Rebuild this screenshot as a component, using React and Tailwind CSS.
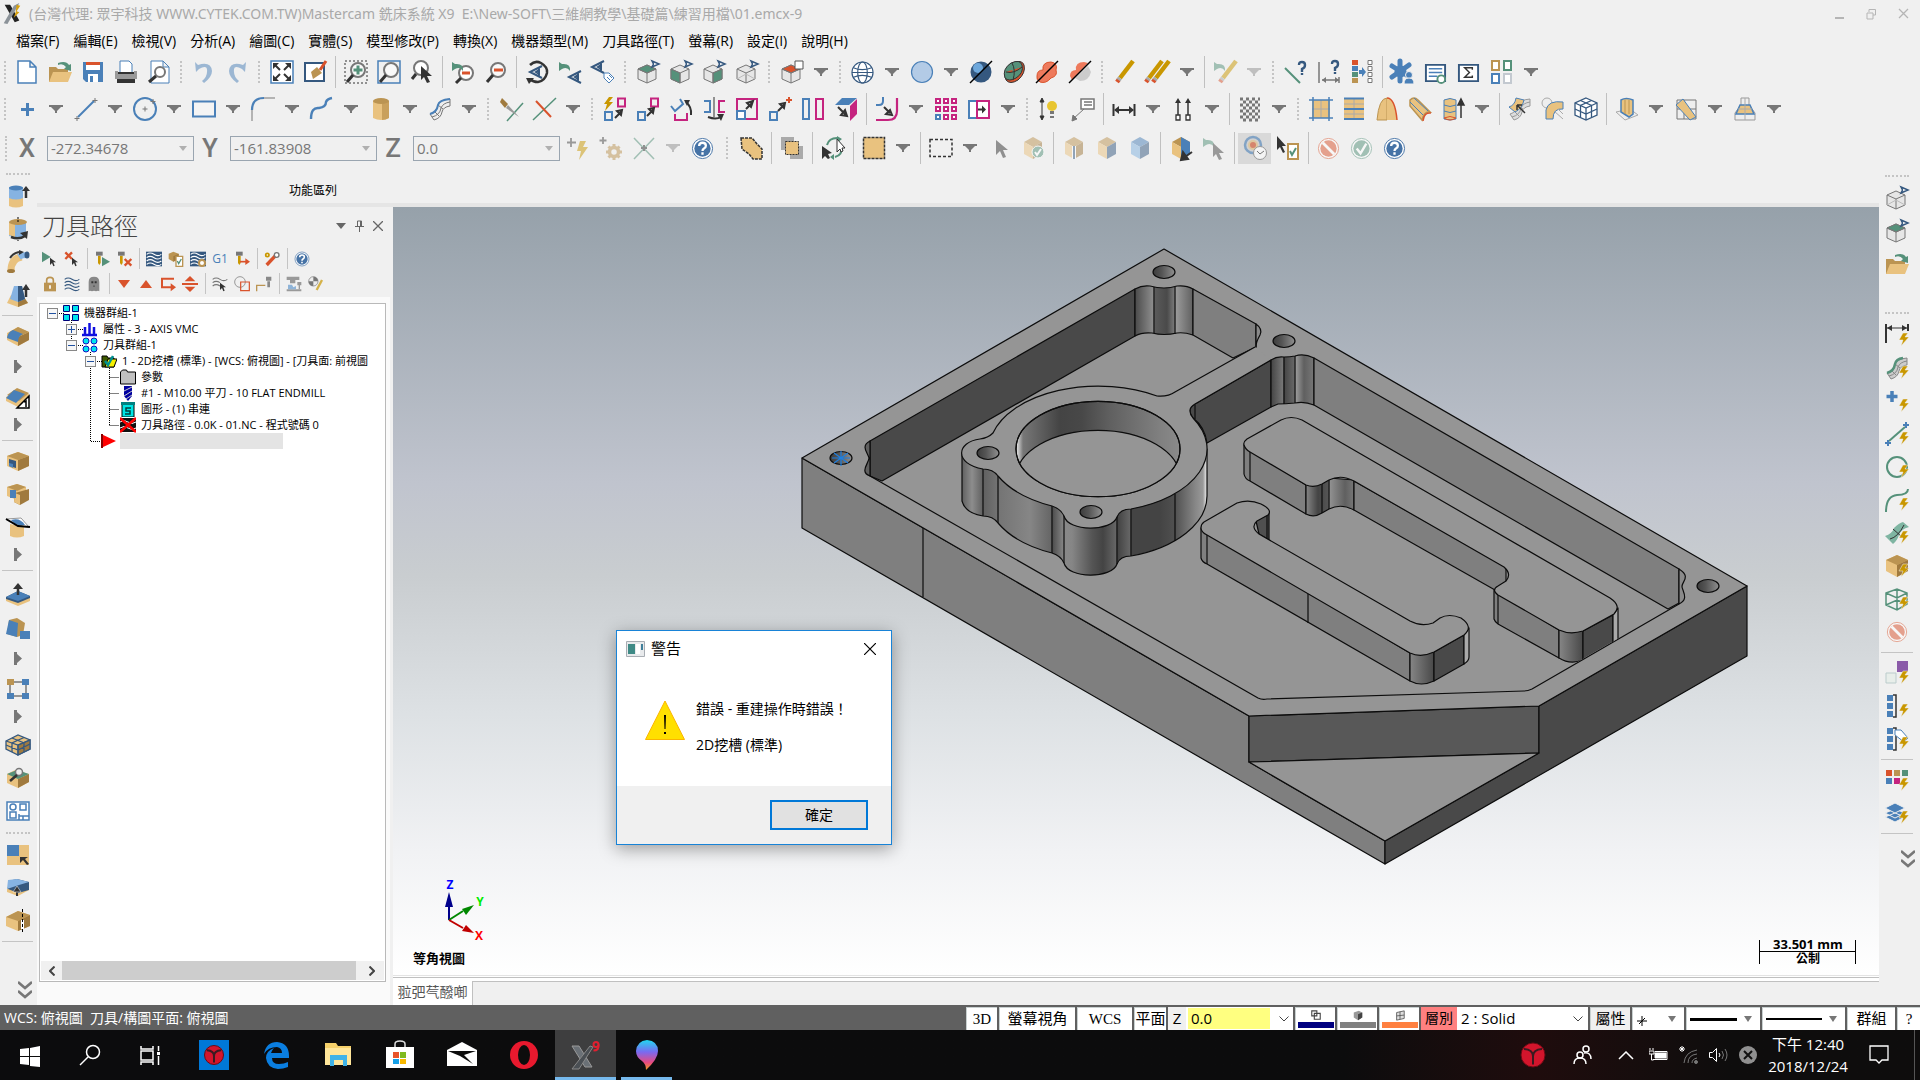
// ---------------------------------------------------------------------------
// Mastercam X9 — main window with the toolpath manager, the isometric part
// view and the "operation failed" warning box, on the Windows 10 taskbar.
// ---------------------------------------------------------------------------
import { useState } from 'react';
import clsx from 'clsx';

const UI_FONT = "font-['Open_Sans','Noto_Sans_CJK_TC',sans-serif]";

const BLUE = '#4a80b8';
const NAVY = '#35587f';
const GREEN = '#55917a';
const RED = '#d9532c';
const TAN = '#e9c27f';
const OCHRE = '#bb9452';
const BROWN = '#a07a3e';
const GRAY = '#777777';
const DARK = '#333333';
const PINK = '#c5247f';
const GOLD = '#c99700';

// ---------------------------------------------------------------------------
// Icon fragments
// ---------------------------------------------------------------------------
function Cube({ t = TAN, l = TAN, r = BROWN, line = 'none' }) {
  return (
    <g stroke={line} strokeLinejoin="round">
      <path d="M12 1 21 6 12 11 3 6z" fill={t} />
      <path d="M3 6 12 11V23L3 18z" fill={l} />
      <path d="M21 6 12 11V23L21 18z" fill={r} />
    </g>
  );
}

// Wire cube with an eye marker, one face filled
function ViewCube({ face }) {
  return (
    <>
      <g fill="#e6e6e6" stroke={GRAY} strokeLinejoin="round">
        <path d="M11 5 20 9V19L11 23 2 19V9z" />
        {face === 'top' && <path d="M11 5 20 9 11 13 2 9z" fill={GREEN} />}
        {face === 'red' && <path d="M11 5 20 9 11 13 2 9z" fill={RED} />}
        {face === 'left' && <path d="M2 9 11 13V23L2 19z" fill={GREEN} />}
        {face === 'right' && <path d="M20 9 11 13V23L20 19z" fill={GREEN} />}
        <path d="M2 9 11 13 20 9M11 13V23" fill="none" />
        {!face && <path d="M2 19 11 14 20 19" fill="none" stroke="#bbb" />}
      </g>
      {face === 'red' ? (
        <path d="M15 1h8v8h-8z" fill="#fff" stroke="#555" />
      ) : (
        <path d="M16 1 23 4 16 7 17.500 4z" fill="#fff" stroke={NAVY} strokeWidth="1.500" />
      )}
    </>
  );
}

const Bolt = () => <path d="M18 10h5l-3 4h4l-8 9 2-6h-4z" fill={GOLD} stroke="#f0f0f0" strokeWidth=".5" />;
const Cursor = ({ c = DARK }) => <path d="M8 4v15l4-4 3 7 3-1-3-7h5z" fill={c} />;
const SmallCursor = () => <path d="M12 10v11l3-3 2 5 2-1-2-5h4z" fill={DARK} />;
const Lens = ({ children }) => (
  <>
    <circle cx="14" cy="10" r="7" fill="#fff" fillOpacity=".6" stroke={GRAY} strokeWidth="2" />
    <path d="M9 15 3 22" stroke={DARK} strokeWidth="3" />
    {children}
  </>
);
const Pencil = ({ x = 0 }) => (
  <g transform={`translate(${x} 0)`}>
    <path d="M20 1 7 18" stroke={GOLD} strokeWidth="4.500" />
    <path d="M7 18 5 20.500" stroke="#aaa" strokeWidth="4.500" />
    <path d="M5.500 20 4 22" stroke={RED} strokeWidth="4.500" />
  </g>
);
const Undo = ({ c = BLUE }) => <path d="M1 2l1 10 3-3q9-5 8 3q0 5-5 9l2 2q8-6 8-12q-1-10-14-6z" fill={c} />;
const SmallUndo = ({ c = GREEN }) => <path d="M1 2v9l3-2q5-3 8 2q1-8-8-7z" fill={c} />;
const Eye = ({ x = 0, y = 0 }) => (
  <path d="M12 0 0 6 12 12M9 2.500v7M9 4 6 6 9 8" transform={`translate(${x} ${y})`} fill="none" stroke={NAVY} strokeWidth="2" />
);
const Tool = () => <path d="M4 2h8v4H4zM6 7h4v11l-2 3-2-3z" fill={GOLD} />;
const Help = ({ ring = '#4673a6' }) => (
  <>
    <circle cx="12" cy="12" r="10.500" fill="#fff" stroke={ring} />
    <circle cx="12" cy="12" r="8.500" fill={ring} />
    <path d="M8.500 9.500q0-3.500 3.500-3.500t3.500 3q0 2-2 3-1.500 1-1.500 2.500M12 16v2.500" fill="none" stroke="#fff" strokeWidth="2.400" />
  </>
);
const Forbidden = () => (
  <g opacity=".5">
    <circle cx="12" cy="12" r="10.500" fill="#fff" stroke={RED} />
    <circle cx="12" cy="12" r="8.500" fill={RED} />
    <path d="M6 6 18 18" stroke="#fff" strokeWidth="3" />
  </g>
);
const Folder = () => (
  <>
    <path d="M1 7h7l2 2h10v13H1z" fill={OCHRE} />
    <path d="M5 12h19l-4 10H1z" fill={TAN} />
    <path d="M10 3q8-3 11 2l2-1v7l-7-2 2-2q-3-4-8-2z" fill={GREEN} />
  </>
);
const Waves = ({ c }) => (
  <path d="M1 5q5-4 11 0t11 0M1 10q5-4 11 0t11 0M1 15q5-4 11 0t11 0M1 20q5-4 11 0t11 0" fill="none" stroke={c} strokeWidth="1.700" />
);
const Clip = () => (
  <>
    <path d="M12 8h10v15H12z" fill="#fff" stroke={OCHRE} strokeWidth="2" />
    <path d="M14 15l2 4 4-7" fill="none" stroke={GREEN} strokeWidth="2" />
  </>
);
const Surf = ({ a = '#ddd', b = GRAY }) => (
  <>
    <path d="M2 17Q9 15 10 8q1-5 12-6v7q-7 1-8 6-1 6-8 8z" fill={a} stroke={b} />
    <path d="M6 14 11 19M10 8 15 12M4 20q8-2 9-9q2-5 9-6" fill="none" stroke={b} />
  </>
);

// ---------------------------------------------------------------------------
// Icons, all on a 24 x 24 grid
// ---------------------------------------------------------------------------
const ICONS = {
  new: <path d="M3 1h12l6 6v16H3zM15 1v6h6" fill="#fff" stroke={BLUE} strokeWidth="1.500" />,
  open: <Folder />,
  save: (
    <>
      <path d="M2 2h20v20H5l-3-3z" fill={BLUE} />
      <path d="M5 2h14v8H5z" fill="#fff" />
      <path d="M5 2h14v3H5z" fill={RED} />
      <path d="M7 14h10v8H7z" fill="#fff" />
      <path d="M9 16h3v6H9z" fill={BLUE} />
    </>
  ),
  print: (
    <>
      <path d="M6 1h9l3 3v9H6z" fill="#fff" stroke={BLUE} />
      <path d="M1 11h3v3h16v-3h3v8H1z" fill="#999" />
      <path d="M4 12h16v2H4zM3 19h18v4H3z" fill={DARK} />
    </>
  ),
  preview: (
    <>
      <path d="M4 1h12l6 6v16H4zM16 1v6h6" fill="#fff" stroke={BLUE} />
      <circle cx="13" cy="12" r="5" fill="#fff" stroke={GRAY} strokeWidth="2" />
      <path d="M9 16 2 22" stroke={DARK} strokeWidth="3" />
    </>
  ),
  undo: <g transform="translate(2 0)"><Undo /></g>,
  redo: <g transform="translate(22 0) scale(-1 1)"><Undo /></g>,
  fit: (
    <>
      <path d="M1 1h22v22H1z" fill="#fff" stroke={BLUE} strokeWidth="1.500" />
      <path d="M4 4 10 10M20 4 14 10M4 20 10 14M20 20 14 14" stroke={DARK} strokeWidth="2" />
      <path d="M3 3h6L3 9zM21 3v6l-6-6zM3 21v-6l6 6zM21 21h-6l6-6z" fill={DARK} />
    </>
  ),
  repaint: (
    <>
      <path d="M2 3h19v18H2z" fill="#fff" stroke={NAVY} strokeWidth="2" />
      <path d="M8 12 14 7l5 6-9 6z" fill={OCHRE} />
      <path d="M17 10 23 1" stroke={RED} strokeWidth="3" />
    </>
  ),
  zoomTarget: (
    <>
      <path d="M1 1h22v22H1z" fill="none" stroke={DARK} strokeDasharray="2 2" />
      <Lens><path d="M14 5.500v9M9.500 10h9" stroke={GREEN} strokeWidth="3" /></Lens>
    </>
  ),
  zoomWindow: (
    <>
      <path d="M1 1h22v22H1z" fill="none" stroke={BLUE} strokeWidth="1.500" />
      <Lens />
    </>
  ),
  zoomSelect: (
    <>
      <circle cx="11" cy="8" r="7" fill="#fff" stroke={GRAY} strokeWidth="2" />
      <path d="M6 14 2 19" stroke={DARK} strokeWidth="3" />
      <path d="M11 6v14l3-3 3 6 3-1-3-6h5z" fill={DARK} />
    </>
  ),
  unzoom: (
    <>
      <circle cx="15" cy="13" r="7" fill="#fff" stroke={GRAY} strokeWidth="2" />
      <path d="M10 18 5 23" stroke={DARK} strokeWidth="3" />
      <path d="M11 13h8" stroke={RED} strokeWidth="3" />
      <SmallUndo />
    </>
  ),
  unzoom80: <Lens><path d="M10 10h9" stroke={RED} strokeWidth="3" /></Lens>,
  rotate: (
    <>
      <path d="M5 5q5-5 11-2 7 4 6 10-2 8-9 9-5 0-8-3" fill="none" stroke={DARK} strokeWidth="2.500" />
      <path d="M1 18h8l-5 6z" fill={DARK} />
      <Eye x={5} y={6} />
    </>
  ),
  prevView: <><SmallUndo /><Eye x={11} y={11} /></>,
  namedView: (
    <>
      <Eye x={1} y={1} />
      <path d="M13 13h5l5 5-5 5-5-5z" fill="#fff" stroke={BLUE} />
      <path d="M16 17l3 3M18 15l3 3" stroke={BLUE} />
    </>
  ),
  viewTop: <ViewCube face="top" />,
  viewFront: <ViewCube face="left" />,
  viewRight: <ViewCube face="right" />,
  viewIso: <ViewCube />,
  planes: <ViewCube face="red" />,
  wireframe: (
    <g fill="#fff" stroke={NAVY} strokeWidth="1.200">
      <circle cx="12" cy="12" r="11" />
      <ellipse cx="12" cy="12" rx="5" ry="11" fill="none" />
      <path d="M2.500 7q9 4 19 0M2.500 17q9-4 19 0M1 12h22" fill="none" />
    </g>
  ),
  shaded: <circle cx="12" cy="12" r="10.500" fill="#b3cbe6" stroke={BLUE} strokeWidth="1.200" />,
  shadeBlue: <><circle cx="12" cy="12" r="10.500" fill={NAVY} /><circle cx="9" cy="8" r="5" fill="#6ea8dc" /><path d="M1 23 23 1" stroke="#000" strokeWidth="1.500" /></>,
  shadeGreen: (
    <>
      <path d="M4 20Q0 10 10 3q10-4 12 2 2 8-6 15-8 5-12 0z" fill={RED} stroke={DARK} />
      <path d="M3 18Q0 9 9 3q9-4 11 2 2 8-6 13-7 4-11 0zM4 12q8 2 16-5M10 3q4 7 1 17" fill={GREEN} stroke={DARK} />
    </>
  ),
  shadeRed: <><path d="M2 16q0-6 6-6-1-8 8-8 7 1 5 8 2 6-5 8-5 6-11 4-4-2-3-6z" fill="#ee7a5c" stroke={RED} /><path d="M1 23 23 1" stroke="#000" strokeWidth="1.500" /></>,
  shadeMix: <><path d="M12 21q9 0 11-9l-3-6-13 12z" fill="#ccc" /><path d="M2 16q0-6 6-6-1-8 8-8l4 1L4 20z" fill="#ee7a5c" /><path d="M1 23 23 1" stroke="#000" strokeWidth="1.500" /></>,
  del: <Pencil />,
  delDup: <><Pencil x={-4} /><Pencil x={3} /></>,
  undel: <><Pencil x={3} /><SmallUndo /></>,
  analyze: (
    <>
      <path d="M1 8 16 23" stroke={GREEN} strokeWidth="2" />
      <path d="M15 5q0-3 3-3t3 3-3 4v3M18 13v2" fill="none" stroke={NAVY} strokeWidth="2.400" />
    </>
  ),
  analyzeDist: (
    <>
      <path d="M2 2v21M5 20h17M22 17v6" stroke={GRAY} strokeWidth="1.500" />
      <path d="M5 20l4-3v6zM22 20l-4-3v6z" fill={GRAY} />
      <path d="M15 4q0-3 3-3t3 3-3 4v3M18 12v2" fill="none" stroke={NAVY} strokeWidth="2.400" />
    </>
  ),
  attrs: (
    <>
      <path d="M2 0h6v5H2z" fill={RED} />
      <path d="M2 6h6v5H2z" fill={BLUE} />
      <path d="M2 12h6v5H2z" fill={GREEN} />
      <path d="M2 18h6v5H2z" fill={OCHRE} />
      <path d="M9 10h3V7l4 5-4 5v-3H9z" fill={BLUE} />
      <path d="M18 .5h4v4h-4zM18 6.500h4v4h-4zM18 12.500h4v4h-4zM18 18.500h4v4h-4z" fill="#fff" stroke={GRAY} />
    </>
  ),
  config: (
    <>
      <path d="M9 1v20M1 6l16 10M1 17 18 5" stroke={BLUE} strokeWidth="5" strokeLinecap="round" />
      <circle cx="9.500" cy="11.500" r="6" fill={BLUE} />
      <circle cx="18" cy="15" r="3.500" fill={BLUE} stroke="#f0f0f0" />
      <path d="M13 24q0-6 5-6t5 6z" fill={BLUE} stroke="#f0f0f0" />
    </>
  ),
  history: (
    <>
      <path d="M2 4h20v17H2z" fill="#fff" stroke={NAVY} strokeWidth="2" />
      <path d="M5 8h14M5 12h14M5 16h9" stroke={BLUE} strokeWidth="1.500" />
      <circle cx="18" cy="19" r="4" fill="#fff" stroke={GREEN} strokeWidth="2" />
    </>
  ),
  sigma: (
    <>
      <path d="M2 4h20v17H2z" fill="#fff" stroke={NAVY} strokeWidth="2" />
      <path d="M16 9V7H8l5 5-5 5h8v-2" fill="none" stroke={DARK} strokeWidth="1.500" />
    </>
  ),
  windows: (
    <g fill="#fff" strokeWidth="2">
      <path d="M2 1h7v9H2z" stroke={OCHRE} />
      <path d="M14 1h7v9h-7z" stroke={GREEN} />
      <path d="M2 14h7v9H2z" stroke={BLUE} />
      <path d="M14 14h7v9h-7z" stroke="#c3c9d0" />
    </g>
  ),

  point: <path d="M12.500 6v13M6 12.500h13" stroke={BLUE} strokeWidth="3" />,
  line: <><path d="M4 20 20 4" stroke={BLUE} strokeWidth="2" /><path d="M21 1v5M18.500 3.500h5M3 19v5M.5 21.500h5" stroke={GRAY} /></>,
  circle: <><circle cx="12" cy="12" r="11" fill="none" stroke={BLUE} strokeWidth="2" /><path d="M12 9.500v5M9.500 12h5M20 2v5M17.500 4.500h5" stroke={GRAY} /></>,
  rect: <path d="M1 4.500h22v15H1z" fill="#f4f4f4" stroke={BLUE} strokeWidth="2" />,
  fillet: <><path d="M1 24V13M13 1h11" stroke={GRAY} /><path d="M1 13Q1 1 13 1" fill="none" stroke={BLUE} strokeWidth="2.200" /></>,
  spline: <path d="M1 22q0-12 8-11 7-1 7-6 1-3 6-4" fill="none" stroke={BLUE} strokeWidth="2.400" />,
  cylinder: <><path d="M4 4v17q8 4 16 0V4z" fill={TAN} /><path d="M13 4h7v17q-3 2-7 2z" fill="#c9a05c" /><ellipse cx="12" cy="4" rx="8" ry="3" fill={OCHRE} /></>,
  surface: <><Surf a="#eee" /><path d="M2 17Q9 15 10 8q1-5 12-6" fill="none" stroke={BLUE} strokeWidth="2" /></>,
  trim: <><path d="M8 24 24 6" stroke={GREEN} strokeWidth="1.500" /><path d="M3 1 9 7l-3 4-5-6z" fill={BROWN} /><path d="M9 8 20 20 7 11z" fill="#999" /></>,
  breakTwo: <><path d="M1 23 24 1" stroke={GREEN} strokeWidth="1.500" /><path d="M4 4 19 20" stroke={RED} strokeWidth="2" /></>,
  dynXform: <><path d="M6 0h4L6 5h4L2 14l2-7H1z" fill={GOLD} /><path d="M15 1.500h7v8h-7z" fill="none" stroke={PINK} strokeWidth="2" /><path d="M2 15h7v8H2z" fill="none" stroke={BLUE} strokeWidth="2" /><path d="M12 21 19 14M19 13l-5 1 4 4z" stroke={DARK} strokeWidth="2" /></>,
  translate: <><path d="M15 1.500h7v8h-7z" fill="none" stroke={PINK} strokeWidth="2" /><path d="M2 15h7v8H2z" fill="none" stroke={BLUE} strokeWidth="2" /><path d="M11 19 18 12M18 11l-5 1 4 4z" stroke={DARK} strokeWidth="2" /></>,
  rotate2d: <><path d="M2 9l4 5 8-7-3-5" fill="none" stroke={BLUE} strokeWidth="2" /><path d="M6 17v6h12v-7" fill="none" stroke={PINK} strokeWidth="2" /><path d="M17 5q6 5 5 13" fill="none" stroke={DARK} strokeWidth="2" /><path d="M15 3h6l-3 6z" fill={DARK} /></>,
  mirror: <><path d="M12 0v20" stroke={DARK} /><path d="M2 4h6v11H2" fill="none" stroke={BLUE} strokeWidth="2" /><path d="M23 4h-6v11h6" fill="none" stroke={PINK} strokeWidth="2" /><path d="M6 20q8 3 13 0" fill="none" stroke={DARK} strokeWidth="2" /><path d="M15 17h7l-3 7z" fill={DARK} /></>,
  scale: <><path d="M2 2h20v20H2z" fill="none" stroke={PINK} strokeWidth="2" /><path d="M2 14h8v8H2z" fill="#fff" stroke={BLUE} strokeWidth="2" /><path d="M11 12l6-6M18 4l-6 2 4 4z" stroke={DARK} strokeWidth="2" /></>,
  moveOrigin: <><path d="M2 15h7v8H2z" fill="none" stroke={BLUE} strokeWidth="2" /><path d="M10 14l6-6M17 6l-5 1 4 4z" stroke={DARK} strokeWidth="2" /><path d="M21 0v6M18 3h6" stroke={RED} strokeWidth="2" /></>,
  xlate3d: <><path d="M2 2h6v20H2z" fill="none" stroke={BLUE} strokeWidth="2" /><path d="M15 2h7v20h-7z" fill="none" stroke={PINK} strokeWidth="2" /></>,
  roll: <><path d="M8 1h15l-8 7H1z" fill={BLUE} /><path d="M23 2v15l-7 7V9z" fill={PINK} /><path d="M4 10 12 18M13 19l-6-1 4-5z" stroke={DARK} strokeWidth="2" /></>,
  offset: <><path d="M8 0v4q0 4-4 4H1" fill="none" stroke={BLUE} strokeWidth="2" /><path d="M22 1v13q0 9-9 9H1" fill="none" stroke={PINK} strokeWidth="2.200" /><path d="M9 10l6 6M17 18l-6-1 4-4z" stroke={DARK} strokeWidth="2" /></>,
  array: (
    <g fill="#fff" strokeWidth="2" stroke={PINK}>
      <path d="M2 2h4v4H2zM10 2h4v4h-4zM18 2h4v4h-4zM2 10h4v4H2zM10 10h4v4h-4zM18 10h4v4h-4zM10 18h4v4h-4zM18 18h4v4h-4z" />
      <path d="M2 18h4v4H2z" stroke={BLUE} />
    </g>
  ),
  stretch: <><path d="M2 4h8v17H2z" fill="#fff" stroke={BLUE} strokeWidth="2" /><path d="M10 4h12v17H10z" fill="#fff" stroke={PINK} strokeWidth="2" /><path d="M11 12.500h5" stroke={DARK} strokeWidth="2" /><path d="M19 12.500l-4-4v8z" fill={DARK} /></>,
  smartDim: <><path d="M4 2v20M4 1l-2 4h4zM4 23l-2-4h4z" stroke={DARK} fill={DARK} /><circle cx="14" cy="9" r="5" fill="#e8c530" /><path d="M12 14h4v3h-4zM12 19h4v2h-4z" fill={GRAY} /></>,
  note: <><path d="M10 2h13v10H10zM13 5h8M13 8h8" fill="#fff" stroke={GRAY} strokeWidth="1.500" /><path d="M13 12 2 22M1 24l1-6 4 4z" stroke={GRAY} fill={GRAY} /></>,
  dimH: <><path d="M1.500 7v12M22.500 7v12M3 13h18" stroke={DARK} strokeWidth="2" /><path d="M2 13l5-4v8zM22 13l-5-4v8z" fill={DARK} /></>,
  ordinate: <><path d="M7 5v13M17 5v13" stroke={DARK} strokeWidth="1.500" /><path d="M7 1l3 5H4zM17 1l3 5h-6z" fill={DARK} /><path d="M5 18h4v5H5zM15 18h4v5h-4z" fill="#fff" stroke={DARK} strokeWidth="1.300" /></>,
  hatch: (
    <path
      d="M2 2h20M2 8h20M2 14h20M2 20h20M5 5h18M5 11h18M5 17h18M5 23h18"
      stroke={GRAY}
      strokeWidth="3"
      strokeDasharray="3 3"
    />
  ),
  sfNet: <><path d="M3 3h18v18H3z" fill={TAN} /><path d="M12 3v18M3 12h18" stroke="#aaa" /><path d="M4 0v24M20 0v24M0 3h24M0 21h24" stroke={BLUE} strokeWidth="1.500" /></>,
  sfRuled: <><path d="M2 2h20v20H2z" fill={TAN} /><path d="M12 2v20M2 7h20M2 17h20" stroke="#aaa" /><path d="M2 1.500h20M2 12h20M2 22h20" stroke={BLUE} strokeWidth="2" /></>,
  sfRevolve: <><path d="M2 23Q4 1 12 1v22z" fill={TAN} stroke={OCHRE} /><path d="M12 23V1q8 0 10 22z" fill={TAN} /><path d="M12 1q8 0 10 22" fill="none" stroke={RED} strokeWidth="1.500" /></>,
  sfSwept: <><path d="M2 3Q6-1 10 3L22 15q-6-1-8 8L2 9z" fill={TAN} stroke={OCHRE} strokeWidth="1.500" /><path d="M2 5 15 18M6 1 20 14" stroke={BLUE} /><path d="M23 16q-7-1-8 8" stroke={RED} fill="none" strokeWidth="1.500" /></>,
  sfExtrude: <><path d="M3 3q6-3 12 0v19q-6 2-12 0z" fill={TAN} stroke={BLUE} /><path d="M3 8q6 3 12 0M3 14q6 3 12 0" fill="none" stroke={BLUE} /><path d="M3 21q6-3 12 0-6 4-12 0z" fill="none" stroke={RED} /><path d="M20 6v15M20 2l3 6h-6z" stroke={DARK} fill={DARK} strokeWidth="1.500" /></>,
  sfTrim: <><Surf a="#ddd" b="#999" /><path d="M1 10q6-2 7-9l8 2q-2 9-9 12z" fill={TAN} stroke={BLUE} /><path d="M9 8l8 8M9 8v5M9 8h5" stroke={DARK} strokeWidth="1.500" /></>,
  sfBlend: <><circle cx="6" cy="6" r="5" fill="#eee" stroke="#aaa" /><path d="M5 22V13Q7 3 22 5v7q-10-1-10 10z" fill={TAN} stroke={BLUE} /><path d="M13 14l9 8M17 12l5 5" stroke="#aaa" /></>,
  gridCube: <g fill="#fff" stroke={NAVY} strokeWidth="1.300"><path d="M12 1 23 6V18L12 23 1 18V6z" /><path d="M1 6 12 11 23 6M12 11V23M1 12 12 17 23 12M6.500 3.500l11 5V20M17.500 3.500l-11 5V20" fill="none" /></g>,
  drafting: <><path d="M1 15l9 8 13-5-8-6z" fill="#eee" stroke="#aaa" /><path d="M6 3q5-3 12 0v14l-4 3-8-5z" fill={TAN} stroke={BLUE} strokeWidth="1.500" /><path d="M10 3v14M14 3v14" stroke={OCHRE} /></>,
  fence: <><path d="M3 3h19v19H3zM10 3v19M3 12h19" fill="#eee" stroke={GRAY} /><path d="M2 8 9 2 22 20l-6 3z" fill={TAN} stroke={BLUE} /></>,
  loftSf: <><path d="M8 1h8v7l6 8v7H2v-7l6-8z" fill="#eee" stroke="#999" /><path d="M7 8h10l4 9H3z" fill={TAN} stroke={BLUE} strokeWidth="1.500" /><path d="M12 1v22M5 12h14" stroke="#aaa" /></>,

  fastPoint: <><path d="M5 2v9M1 6.500h9" stroke="#444" strokeWidth="1.800" /><path d="M14 5h6l-3 6h5l-9 13 2-9h-4z" fill={GOLD} /></>,
  gearPoint: <><path d="M4 1v7M.5 4.500h7" stroke="#444" strokeWidth="1.800" /><path d="M15 8v16M7 16h16M9.500 10.500l11 11M20.500 10.500l-11 11" stroke={OCHRE} strokeWidth="3" /><circle cx="15" cy="16" r="4.500" fill="#f0f0f0" stroke={OCHRE} strokeWidth="3.500" /></>,
  cross: <><path d="M2 2 22 23M22 2 2 23" stroke={GREEN} strokeWidth="1.500" /><path d="M12 9v6M9 12h6" stroke="#333" strokeWidth="2" /></>,
  help: <Help />,
  selChain: <path d="M2 2h11l5 6 5 5v10h-9l-4-5-7-5z" fill={TAN} stroke={DARK} strokeWidth="1.500" strokeDasharray="3 1" />,
  selStack: <><path d="M1 1h13v13H1zM10 10h13v13H10z" fill="#aaa" /><path d="M5.500 5.500h13v13h-13z" fill={TAN} stroke={DARK} strokeDasharray="2 1" /></>,
  selCycle: <><path d="M6 9q2-7 10-7M20 11q2 8-6 10" fill="none" stroke={GREEN} strokeWidth="2" /><path d="M16 0l5 3-5 4zM13 18v6l-4-3z" fill={GREEN} /><path d="M1 10v13l3-3 3 3 2-1-2-4 4-1z" fill={DARK} /><path d="M16 3v13l3-3 1 3 2-1-1-3h3z" fill="#fff" stroke={DARK} /></>,
  selAll: <path d="M1.500 1.500h21v21h-21z" fill={TAN} stroke={DARK} strokeWidth="1.500" strokeDasharray="3 1" />,
  selBox: <path d="M1 3.500h22v17H1z" fill="none" stroke={DARK} strokeWidth="1.500" strokeDasharray="3 2" />,
  cursor: <Cursor />,
  cubeOk: <><Cube t={OCHRE} l={TAN} r={BROWN} /><circle cx="17" cy="16" r="6" fill={GREEN} stroke="#fff" /><path d="M14 16l2 3 4-6" fill="none" stroke="#fff" strokeWidth="2" /></>,
  cubeEdge: <><Cube t={OCHRE} l={TAN} r={BROWN} /><path d="M12 10v13" stroke="#fff" strokeWidth="4" /><path d="M12 10v13" stroke={NAVY} strokeWidth="2" /></>,
  cubeFace: <Cube t={OCHRE} l={TAN} r={NAVY} />,
  cubeBody: <Cube t={BLUE} l="#7fb2e0" r={NAVY} />,
  cubeBack: <><Cube t={OCHRE} l={TAN} r={BLUE} /><path d="M12 1l9 5v8l-9-3z" fill={BLUE} /><path d="M23 16l-7 5M12 24l2-8 5 7z" stroke={DARK} strokeWidth="2" fill={DARK} /></>,
  undoCursor: <><SmallUndo /><path d="M11 7v14l3-3 3 6 3-1-3-6h5z" fill="#444" /></>,
  timed: <><circle cx="10" cy="9" r="8" fill="#ccc" stroke={BLUE} strokeWidth="2.500" opacity=".6" /><circle cx="10" cy="9" r="4" fill={RED} stroke={TAN} strokeWidth="2" opacity=".6" /><circle cx="17" cy="17" r="6.500" fill="#f4f4f4" stroke="#999" /><path d="M14 15l3 3 4-3" fill="none" stroke={GRAY} /></>,
  cursorClip: <><path d="M1 0v14l3-3 3 6 2-1-3-6h4z" fill={DARK} /><Clip /></>,
  stop: <Forbidden />,
  okRound: <g opacity=".5"><circle cx="12" cy="12" r="10.500" fill="#fff" stroke={GREEN} /><circle cx="12" cy="12" r="8.500" fill={GREEN} /><path d="M7 12l4 5 6-10" fill="none" stroke="#fff" strokeWidth="2.500" /></g>,

  // solids, left bar
  extrude: <><path d="M3 13v9q7 3 14 0v-9z" fill={TAN} /><path d="M3 3v11q7 3 14 0V3z" fill="#86b3e2" /><ellipse cx="10" cy="4" rx="7" ry="2.500" fill={BLUE} /><path d="M20 5v9" stroke={DARK} strokeWidth="2.500" /><path d="M20 2l4 5h-8z" fill={DARK} /></>,
  revolve: <><path d="M3 5v14q8 3 17 0V5z" fill="#86b3e2" /><path d="M3 5v13l6 2V6z" fill={TAN} /><ellipse cx="12" cy="5" rx="9" ry="3" fill={OCHRE} /><path d="M12 0v5M12 20v4" stroke="#000" strokeDasharray="2 1" /><path d="M5 20q8 3 14-1" fill="none" stroke={DARK} strokeWidth="2.500" /><path d="M22 14l-8 2 7 6z" fill={DARK} /></>,
  sweep: <><path d="M5 21Q5 8 16 7" fill="none" stroke={TAN} strokeWidth="7" /><path d="M13 7q3-2 7-2" stroke="#86b3e2" strokeWidth="6" fill="none" /><ellipse cx="21" cy="5" rx="2.500" ry="3.500" fill={NAVY} /><ellipse cx="5" cy="21" rx="4" ry="2" fill={BROWN} /><path d="M4 8q4-6 11-6" fill="none" stroke={DARK} strokeWidth="2" /><path d="M18 2l-5-2v5z" fill={DARK} /></>,
  loft: <><path d="M5 12h12l5 8-10 4L1 20z" fill={TAN} /><path d="M12 13h5l5 7-10 4z" fill={BROWN} /><path d="M8 3h8l3 13-7 3-8-3z" fill="#86b3e2" /><path d="M12 3h4l3 13-7 3z" fill={NAVY} /><path d="M20 5v9" stroke={DARK} strokeWidth="2.500" /><path d="M20 1l4 6h-8z" fill={DARK} /></>,
  solFillet: <><path d="M1 9 12 3l11 5v8l-11 6-11-6z" fill={TAN} /><path d="M12 13l11-5v8l-11 6z" fill={BROWN} /><path d="M1 14q1-6 6-8l5-3 11 5-11 5z" fill={OCHRE} /><path d="M1 14q1-6 6-8l10 4q-5 2-5 8z" fill={BLUE} /></>,
  chamfer: <><path d="M0 12 12 5l11 4v5l-11 8-12-6z" fill={TAN} /><path d="M1 10 11 3l12 5-10 8z" fill={OCHRE} /><path d="M0 13 8 5l11 4-9 9z" fill={BLUE} /><path d="M23 11v12H11z" fill="#fff" stroke="#000" strokeWidth="1.500" /><path d="M18 17l2-1v6" stroke="#000" fill="none" strokeWidth="1.500" /></>,
  shell: <><path d="M1 7l11-4 11 4v10l-11 5L1 17z" fill={TAN} /><path d="M1 7l11-4 11 4-11 4z" fill={OCHRE} /><path d="M12 11l11-4v10l-11 5z" fill={BROWN} /><path d="M3 10l7 2v7l-7-2z" fill={NAVY} /><path d="M3 14l4 1v4l-4-2z" fill={BLUE} /></>,
  boolean: <><path d="M1 5l10-3 9 3v10l-9 3-10-4z" fill={TAN} /><path d="M1 5l10-3 9 3-9 4z" fill={OCHRE} /><path d="M9 11l14-4v11l-9 5-6-3z" fill={BROWN} /><path d="M9 11l5 2v10l-6-3z" fill={TAN} /><path d="M4 8h6v8H4z" fill={BLUE} /></>,
  trimSol: <><path d="M4 9v12q7 3 14 0V12z" fill={TAN} /><path d="M0 4l15-1 8 9-11-1z" fill="#fff" stroke="#999" /><path d="M5 5q9-3 14 5-9 2-14-5z" fill={BLUE} /><path d="M0 4l12 7 12 1" fill="none" stroke="#000" strokeWidth="2" /></>,
  pressPull: <><path d="M0 15l12-6 12 5v4l-12 5-12-5z" fill={TAN} /><path d="M0 14l12-6 12 5v2l-12 5-12-4z" fill={NAVY} /><path d="M0 14l12-6 12 5-12 5z" fill={BLUE} /><path d="M12 4v8" stroke={DARK} strokeWidth="2.500" /><path d="M12 0l5 6H7z" fill={DARK} /></>,
  moveFace: <><path d="M3 4l8-2 8 5-2 12-6 2-10-3z" fill={OCHRE} /><path d="M3 4l9 3-1 14-11-3z" fill={BLUE} /><path d="M14 15h10v8H14z" fill={BLUE} /></>,
  pattern: <><path d="M4 5h16v14H4z" fill="none" stroke={GRAY} strokeWidth="1.500" /><path d="M1 2h7v6H1z" fill={OCHRE} /><path d="M16 2h7v6h-7zM1 16h7v6H1zM16 16h7v6h-7z" fill={BLUE} /></>,
  gridSolid: <g stroke={NAVY} strokeWidth="1.300"><path d="M0 8 12 2 24 7v9l-12 6-12-6z" fill={TAN} /><path d="M12 12 24 7v9l-12 6z" fill={BROWN} /><path d="M0 8l12 4 12-5M12 12v10M0 12l12 5 12-6M6 5l12 5v9M18 4.500 6 10v9" fill="none" /></g>,
  inspect: <><path d="M1 8l8-4 14 4v8l-11 6-11-5z" fill={TAN} /><path d="M12 13l11-5v8l-11 6z" fill={BROWN} /><path d="M1 8l10-4 12 4-11 5z" fill={GREEN} /><circle cx="13" cy="6" r="3.500" fill="#eee" stroke={GRAY} strokeWidth="1.500" /><path d="M11 9l-7 6" stroke={DARK} strokeWidth="2.500" /></>,
  layoutSol: <><path d="M1 3h22v18H1z" fill="#fff" stroke={BLUE} strokeWidth="1.500" /><circle cx="7" cy="8" r="3" fill="none" stroke={BLUE} strokeWidth="1.500" /><path d="M14 5h6v6h-6zM4 13h6v6H4zM13 17h10M13 15v6M17 17v4" fill="none" stroke={BLUE} strokeWidth="1.500" /></>,
  quad: <><path d="M1 2h22v20H1z" fill={TAN} /><path d="M1 2h12v11H1z" fill={BLUE} /><path d="M14 14h8l-3 2 4 5-2 1-4-5-3 3z" fill={DARK} /></>,
  sfPress: <><path d="M1 11l11 3 11-4v4l-11 6-11-4z" fill={TAN} /><path d="M2 5l9-2 12 3v8l-11 3-10-4z" fill={NAVY} /><path d="M2 4l9-1 12 3-10 3-12 4z" fill="#86b3e2" /><path d="M11 14v6" stroke={DARK} strokeWidth="2" /><path d="M11 10l4 6H7z" fill={DARK} stroke="#fff" strokeWidth=".5" /></>,
  cutCube: <><path d="M0 8l12-6 12 4v11l-12 5-12-5z" fill={TAN} /><path d="M0 8l12-6 12 4-12 6z" fill={OCHRE} /><path d="M12 12l12-6v11l-12 5z" fill={BROWN} /><path d="M16.500 11v9" stroke="#fff" strokeWidth="3" /><path d="M16.500 0v24" stroke="#000" strokeDasharray="3 2" /></>,

  // right bar
  rDim: <><path d="M1 1v19M23 1v7" stroke={DARK} strokeWidth="2" /><path d="M2 5h20" stroke={DARK} /><path d="M2 5l5-3v6zM22 5l-5-3v6z" fill={DARK} /><Bolt /></>,
  rSurf: <><Surf a="#ccc" b="#888" /><path d="M2 17Q9 15 10 8q1-5 8-6" fill="none" stroke={GREEN} strokeWidth="2.500" /><Bolt /></>,
  rPoint: <><path d="M7 2v11M1.500 7.500h11" stroke={BLUE} strokeWidth="3.500" /><Bolt /></>,
  rLine: <><path d="M4 19 20 5" stroke={GREEN} strokeWidth="2" /><path d="M21 0v6M18 3h6M3 18v6M0 21h6" stroke={BLUE} strokeWidth="2" /><Bolt /></>,
  rCircle: <><circle cx="12" cy="12" r="10" fill="none" stroke={GREEN} strokeWidth="2" /><Bolt /></>,
  rSpline: <><path d="M1 24Q1 8 12 7q11 0 11-6" fill="none" stroke={GREEN} strokeWidth="2" /><Bolt /></>,
  rSurf2: <><path d="M0 15q7-2 9-8 5-5 9-6l6 5q-8 2-10 8-2 6-6 9z" fill="#7fb5a2" /><path d="M5 18q8-2 14-14M8 8l9 8" fill="none" stroke={DARK} /><Bolt /></>,
  rSolid: <><path d="M1 6l11-5 11 5v11l-11 6-11-6z" fill={TAN} /><path d="M1 6l11-5 11 5-11 5z" fill={OCHRE} /><path d="M12 11l11-5v11l-11 6z" fill={BROWN} /><Bolt /></>,
  rWire: <><path d="M1 6l11-4 10 4v11l-10 6-11-5zM1 6l11 5 10-5M12 11v12M1 18l11-5 10 4M12 2v11" fill="none" stroke={GREEN} strokeWidth="1.500" /><Bolt /></>,
  rColor: <><path d="M12 0h11v11H12z" fill="#8a5aa8" /><path d="M1 12h10v10H1z" fill="#e8eeea" stroke="#bcc" /><Bolt /></>,
  rLevels: <><path d="M2 1h6v6H2zM2 9h6v6H2zM2 17h6v6H2z" fill={BLUE} /><path d="M8 1h3v22H8" fill="none" stroke={DARK} strokeWidth="1.500" /><Bolt /></>,
  rLevelTag: <><path d="M2 1h6v6H2zM2 9h6v6H2zM2 17h6v6H2z" fill={BLUE} /><path d="M8 1h3v22H8" fill="none" stroke={DARK} strokeWidth="1.500" /><path d="M10 3h6l7 8-4 4-9-7z" fill="#fff" stroke={BLUE} /><Bolt /></>,
  rPalette: <><path d="M1 2h6v6H1z" fill={RED} /><path d="M9 2h6v6H9z" fill={OCHRE} /><path d="M17 2h6v6h-6z" fill={GREEN} /><path d="M1 10h6v6H1z" fill={BLUE} /><path d="M9 10h6v6H9z" fill={PINK} /><Bolt /></>,
  rLayers: <><path d="M0 16l10-4 10 4-10 5zM0 12l10-4 10 4-10 5z" fill={BLUE} stroke="#f0f0f0" /><path d="M0 7l10-5 10 5-10 5z" fill={BLUE} stroke="#f0f0f0" /><Bolt /></>,

  // toolpath manager
  tpSelect: <><path d="M0 1l13 8-13 8z" fill={GREEN} /><SmallCursor /></>,
  tpUnselect: <><path d="M2 2l10 10M12 2 2 12" stroke={RED} strokeWidth="3.500" /><SmallCursor /></>,
  tpRegen: <><Tool /><path d="M3 1h10v6H3z" fill={GRAY} /><path d="M12 9l12 7-12 7z" fill={GREEN} /></>,
  tpRegenX: <><Tool /><path d="M3 1h10v6H3z" fill={GRAY} /><path d="M13 12l10 10M23 12 13 22" stroke={RED} strokeWidth="3.500" /></>,
  tpBack: <><path d="M0 1h24v22H0z" fill={NAVY} /><Waves c="#fff" /></>,
  tpVerify: <><path d="M1 4l7-3 8 3v8l-8 4-7-4z" fill={OCHRE} /><path d="M8 8l8-4v8l-8 4z" fill={BROWN} /><Clip /></>,
  tpSim: <><path d="M0 1h24v22H0z" fill={NAVY} /><Waves c="#fff" /><circle cx="18" cy="18" r="4.500" fill="#fff" stroke={OCHRE} strokeWidth="3" /></>,
  tpFeed: <><Tool /><path d="M3 1h10v6H3z" fill={GRAY} /><path d="M9 16h10" stroke={RED} strokeWidth="2.500" /><path d="M24 16l-7-5v10z" fill={RED} /></>,
  tpHigh: <><path d="M4 21 19 5" stroke={RED} strokeWidth="5" /><circle cx="19" cy="6" r="3.500" fill="#fff" stroke={GRAY} strokeWidth="2" /><circle cx="5" cy="6" r="2.500" fill="#fff" stroke={GOLD} strokeWidth="2.500" /></>,
  tpLock: <><path d="M7 11V6q0-4 5-4t5 4v5" fill="none" stroke={OCHRE} strokeWidth="2.500" /><path d="M3 10h18v13H3z" fill={OCHRE} /><path d="M12 14v5" stroke="#fff" strokeWidth="2.500" /></>,
  tpWaves: <Waves c={NAVY} />,
  tpGhost: <><path d="M4 23V9q0-8 8-8t8 8v14l-2-1-3 1-3-1-3 1-3-1z" fill="#888" /><path d="M8 8h3v3H8zM13 8h3v3h-3z" fill="#333" /><path d="M12 13l-1 3h2z" fill="#333" /></>,
  tpDown: <path d="M3 6h18l-9 12z" fill={RED} />,
  tpUp: <path d="M3 18h18L12 6z" fill={RED} />,
  tpLoop: <><path d="M21 4H3v13h15" fill="none" stroke={RED} strokeWidth="3" /><path d="M24 17l-8-6v12z" fill={RED} /></>,
  tpSplit: <path d="M12 0l8 8H4zM12 24l8-8H4zM0 10.500h24v3H0z" fill={RED} />,
  tpPick: <><path d="M1 5q5-4 11 0t11 0M1 10q5-4 11 0M1 15q5-4 11 0" fill="none" stroke={GRAY} strokeWidth="1.600" /><SmallCursor /></>,
  tpGeom: <><circle cx="9" cy="9" r="8" fill="none" stroke="#999" strokeWidth="1.500" /><path d="M10 9h13v13H10z" fill="none" stroke={RED} strokeWidth="1.800" /></>,
  tpHolder: <><path d="M1 23V14h13" fill="none" stroke={OCHRE} strokeWidth="2" /><path d="M15 1h8v6h-8zM17 8h4v9h-4z" fill="#888" /></>,
  tpMachine: <g fill="#999"><path d="M1 1h19v5H1zM6 6h8v5H6zM1 20h22v3H1z" /><path d="M3 13h6l2 4 4-2v5H3z" fill="#8fb4d8" /><path d="M17 9h6v5h-6zM19 14h2v6h-2z" /></g>,
  tpEdit: <><circle cx="8" cy="8" r="7" fill="#eee" stroke={GRAY} /><path d="M8 1q7 0 7 7H8zM8 15q-7 0-7-7h7z" fill={GRAY} /><path d="M21 6 13 21" stroke={GOLD} strokeWidth="3.500" opacity=".7" /></>,
};

function Icon({ name, size = 'size-6' }) {
  return (
    <svg viewBox="0 0 24 24" className={clsx(size, 'shrink-0 overflow-visible')} fill="none" aria-hidden="true">
      {ICONS[name]}
    </svg>
  );
}

// ---------------------------------------------------------------------------
// Horizontal toolbars. Tokens: ":" grip, "|" divider, "v" drop arrow,
// "~name" disabled, "*name" pressed
// ---------------------------------------------------------------------------
const SMALL = ['sigma', 'history', 'help', 'stop', 'okRound', 'wireframe'];

function Tokens({ items, wideGrip = false }) {
  return items.split(' ').map((t, i) => {
    if (t === ':') {
      return (
        <span key={i} className={clsx('flex shrink-0 justify-center', i === 0 ? 'w-[10px]' : wideGrip ? 'w-[15px]' : 'w-3')}>
          <span className="h-[22px] border-l-2 border-dotted border-[#c4c4c4]" />
        </span>
      );
    }
    if (t === '|') {
      return (
        <span key={i} className="flex w-2 shrink-0 justify-center">
          <span className="h-8 w-px bg-[#c0c0c0]" />
        </span>
      );
    }
    if (t === 'v' || t === '~v') {
      return (
        <button key={i} type="button" aria-label="More" className={clsx('flex h-8 w-[26px] shrink-0 items-center justify-center', t === '~v' && 'opacity-40')}>
          <svg viewBox="0 0 14 8" className="h-2 w-[14px]" aria-hidden="true">
            <path d="M0 0h14v2h-2L8 6v2H6V6L2 2H0z" fill={GRAY} />
          </svg>
        </button>
      );
    }
    const name = t.replace(/^[~*]/, '');
    return (
      <button
        key={i}
        type="button"
        aria-label={name}
        className={clsx(
          'flex h-[31px] w-[33px] shrink-0 items-center justify-center',
          t[0] === '~' && 'opacity-50',
          t[0] === '*' && 'bg-[#d9d9d9]'
        )}
      >
        <Icon name={name} size={SMALL.includes(name) ? 'size-[23px]' : 'size-6'} />
      </button>
    );
  });
}

const ROW_1 =
  ': new open save print preview : ~undo ~redo : fit repaint | zoomTarget zoomWindow zoomSelect | unzoom unzoom80 | rotate prevView namedView : viewTop viewFront viewRight viewIso : planes v : wireframe v shaded v shadeBlue shadeGreen shadeRed shadeMix : del delDup v | ~undel ~v : analyze analyzeDist attrs | config history sigma windows v';
const ROW_2 =
  ': point v line v circle v rect v fillet v spline v cylinder v surface v : trim breakTwo v : dynXform translate rotate2d mirror scale moveOrigin xlate3d roll | offset v array stretch v : smartDim note | dimH v ordinate v | hatch v : sfNet sfRuled sfRevolve sfSwept sfExtrude v | sfTrim sfBlend gridCube | drafting v fence v loftSf v';
const ROW_3 =
  '~fastPoint ~gearPoint ~cross ~v help : selChain | selStack | selCycle | selAll v | selBox v ~cursor ~cubeOk | ~cubeEdge ~cubeFace ~cubeBody | cubeBack ~undoCursor | *timed cursorClip | stop okRound help';

const MENUS = ['檔案(F)', '編輯(E)', '檢視(V)', '分析(A)', '繪圖(C)', '實體(S)', '模型修改(P)', '轉換(X)', '機器類型(M)', '刀具路徑(T)', '螢幕(R)', '設定(I)', '說明(H)'];

function TitleBar() {
  return (
    <div className="flex h-[27px] items-center pr-[11px] pl-[3px] text-[#a9a9a9]">
      <svg viewBox="0 0 18 24" className="mr-2 h-[22px] w-[18px] shrink-0" aria-hidden="true">
        <path d="M1 2h6l10 17-5 2z" fill="#222" />
        <path d="M11 3l6-3-6 11-7 12-4-1z" fill="#8c9399" />
        <path d="M14 2l4 1-4 6 3 1-6 6 2-6z" fill="#d5a010" />
      </svg>
      <h1 className="grow font-['Noto_Sans','Noto_Sans_CJK_TC',sans-serif] text-sm whitespace-pre">
        (台灣代理: 眾宇科技 WWW.CYTEK.COM.TW)Mastercam 銑床系統 X9  E:\New-SOFT\三維網教學\基礎篇\練習用檔\01.emcx-9
      </h1>
      <div className="flex items-center gap-[22px]">
        <button type="button" aria-label="Minimize" className="pt-1">
          <svg viewBox="0 0 9 12" className="h-3 w-[9px]"><path d="M0 7h9v2H0z" fill="#b5b5b5" /></svg>
        </button>
        <button type="button" aria-label="Restore">
          <svg viewBox="0 0 10 12" className="h-3 w-[10px]" fill="none" stroke="#b5b5b5">
            <path d="M3 4V1.500h6.500V7H7M1 5h6v6H1z" />
          </svg>
        </button>
        <button type="button" aria-label="Close">
          <svg viewBox="0 0 11 11" className="h-[11px] w-[11px]" stroke="#b5b5b5" strokeWidth="1.300"><path d="M1 1l9 9M10 1 1 10" /></svg>
        </button>
      </div>
    </div>
  );
}

function CoordBox({ axis, value }) {
  return (
    <div className="flex items-center">
      <label htmlFor={`coord-${axis}`} className="w-9 pr-1 text-center font-['Roboto',sans-serif] text-[26px] leading-7 font-medium text-[#777]">
        {axis}
      </label>
      <div className="flex h-[25px] w-[147px] items-center border border-[#9aa5b0] bg-[#f0f0f0] pr-[6px] pl-[3px]">
        <input id={`coord-${axis}`} defaultValue={value} className="w-full min-w-0 bg-transparent text-[15px] leading-5 text-[#777] outline-none" />
        <svg viewBox="0 0 8 5" className="h-[5px] w-2 shrink-0" aria-hidden="true"><path d="M0 0h8L4 5z" fill="#b0b0b0" /></svg>
      </div>
    </div>
  );
}

// ---------------------------------------------------------------------------
// Side bars
// ---------------------------------------------------------------------------
const LEFT_BAR = [
  ':', 'extrude', 'revolve', 'sweep', 'loft', '|', 'solFillet', '>>', 'chamfer', '>', '|', 'shell', 'boolean', 'trimSol', '>', '|', '.',
  'pressPull', 'moveFace', '>>', 'pattern', '>', 'gridSolid', 'inspect', 'layoutSol', ':', 'quad', 'sfPress', 'cutCube', '|',
];
const RIGHT_BAR = [
  ':', 'viewIso', 'viewTop', 'open', '_', ':', 'rDim', 'rSurf', 'rPoint', 'rLine', 'rCircle', 'rSpline', 'rSurf2', 'rSolid', 'rWire',
  'stop', '|', 'rColor', 'rLevels', 'rLevelTag', '|', 'rPalette', 'rLayers', '|',
];

function SideBar({ items, label, className, moreClass }) {
  return (
    <nav aria-label={label} className={clsx('flex shrink-0 flex-col items-center bg-[#f0f0f0]', className)}>
      {items.map((t, i) => {
        if (t === ':') return <span key={i} className="flex h-[11px] items-center"><span className="w-[24px] border-t-2 border-dotted border-[#c4c4c4]" /></span>;
        if (t === '|') return <span key={i} className="flex h-2 w-full items-center px-[2px]"><span className="h-px w-full bg-[#c4c4c4]" /></span>;
        if (t === '_') return <span key={i} className="h-[27px]" />;
        if (t === '.') return <span key={i} className="h-1" />;
        if (t === '>' || t === '>>') {
          return (
            <button key={i} type="button" aria-label="More" className={clsx('flex items-center', t === '>' ? 'h-[23px]' : 'h-7')}>
              <svg viewBox="0 0 8 13" className="h-[13px] w-2"><path d="M0 0h3v2l5 4.500-5 4.500v2H0z" fill={GRAY} /></svg>
            </button>
          );
        }
        return (
          <button key={i} type="button" aria-label={t} className="flex h-[33px] w-[33px] items-center justify-center">
            <Icon name={t} size={t === 'stop' ? 'size-[22px]' : 'size-6'} />
          </button>
        );
      })}
      <button type="button" aria-label="Show more" className={clsx('self-end', moreClass)}>
        <svg viewBox="0 0 14 20" className="h-5 w-[14px]" fill="none" stroke={GRAY} strokeWidth="2.500">
          <path d="M0 2l7 6 7-6M0 11l7 6 7-6" />
        </svg>
      </button>
    </nav>
  );
}

// ---------------------------------------------------------------------------
// Toolpath manager
// ---------------------------------------------------------------------------
const TP_ROW_1 = 'tpSelect tpUnselect | tpRegen tpRegenX | tpBack tpVerify tpSim tpPost tpFeed | tpHigh | help';
const TP_ROW_2 = 'tpLock tpWaves tpGhost | tpDown tpUp tpLoop tpSplit | tpPick tpGeom tpHolder | tpMachine tpEdit';

function PanelTools({ items }) {
  return (
    <div className="flex h-[25px] items-center">
      {items.split(' ').map((t, i) =>
        t === '|' ? (
          <span key={i} className="flex w-2 justify-center"><span className="h-[21px] w-px bg-[#c4c4c4]" /></span>
        ) : (
          <button key={i} type="button" aria-label={t} className="flex h-5 w-[22px] items-center justify-center text-xs text-[#4a80b8]">
            {t === 'tpPost' ? 'G1' : <Icon name={t} size="size-4" />}
          </button>
        )
      )}
    </div>
  );
}

const TREE_ICONS = {
  machine: <path d="M.5.5h6v6h-6zM9.500.5h6v6h-6zM.5 9.500h6v6h-6zM9.500 9.500h6v6h-6z" fill="#00e5f0" stroke="#00007a" />,
  props: <path d="M0 14h15M3 6v8M7.500 2v12M12 6v8" stroke="#1010e0" strokeWidth="2.500" />,
  group: <g fill="#00e5f0" stroke="#1010c0"><circle cx="4" cy="4" r="3" /><circle cx="12" cy="4" r="3" /><circle cx="4" cy="12" r="3" /><circle cx="12" cy="12" r="3" /></g>,
  op: <><path d="M1 14V3h5l1 2h6v9z" fill="#3f5a00" stroke="#000" /><path d="M4 14l3-8h9l-3 8z" fill="#f5f000" stroke="#000" /><path d="M4 8l3 4 5-9" stroke="#009090" strokeWidth="2.500" fill="none" /></>,
  params: <path d="M.5 15V3l2-2h4l1 2h8v12z" fill="#c0c0c0" stroke="#000" />,
  tool: <><path d="M4 1h8v10l-4 5-4-5z" fill="#0000a0" /><path d="M4 6l8-4M4 11l8-5M6 14l6-4" stroke="#ccc" /></>,
  geom: <><path d="M2 3h12v13H2z" fill="#00e5e5" stroke="#000" /><path d="M1 1h14v3H1z" fill="#008080" /><path d="M11 7H6v3h4v3H5" fill="none" stroke="#004040" strokeWidth="1.500" /></>,
  nci: <><path d="M0 1h16v14H0z" fill="#111" /><path d="M0 5q4-3 8 0t8 0M0 11q4-3 8 0t8 0" stroke="#fff" fill="none" /><path d="M0 1l16 14M16 1 0 15" stroke="#ff0000" strokeWidth="2.500" /></>,
};

const TREE = [
  { pad: 'pl-[7px]', box: '-', icon: 'machine', text: '機器群組-1' },
  { pad: 'pl-[26px]', box: '+', icon: 'props', text: '屬性 - 3 - AXIS VMC' },
  { pad: 'pl-[26px]', box: '-', icon: 'group', text: '刀具群組-1' },
  { pad: 'pl-[45px]', box: '-', icon: 'op', text: '1 - 2D挖槽 (標準) - [WCS: 俯視圖] - [刀具面: 前視圖' },
  { pad: 'pl-[80px]', icon: 'params', text: '參數' },
  { pad: 'pl-[80px]', icon: 'tool', text: '#1 - M10.00 平刀 - 10 FLAT ENDMILL' },
  { pad: 'pl-[80px]', icon: 'geom', text: '圖形 - (1) 串連' },
  { pad: 'pl-[80px]', icon: 'nci', text: '刀具路徑 - 0.0K - 01.NC - 程式號碼 0' },
];

function ToolpathManager() {
  return (
    <section className="flex w-[353px] shrink-0 flex-col bg-[#fafafa]">
      <div className="bg-[#f0f0f0] pb-px pl-[2px]">
        <div className="flex h-[39px] items-center pr-[7px] pb-[2px] pl-[3px]">
          <h2 className="grow text-2xl leading-8 font-light text-[#444]">刀具路徑</h2>
          <div className="flex items-center gap-[9px]">
            <button type="button" aria-label="Menu"><svg viewBox="0 0 10 6" className="h-[6px] w-[10px]"><path d="M0 0h10L5 6z" fill="#666" /></svg></button>
            <button type="button" aria-label="Pin">
              <svg viewBox="0 0 9 12" className="h-3 w-[9px]" fill="none" stroke="#666"><path d="M2.500 6V1h4v5M0 6.500h9M4.500 7v5M5.500 1v5" /></svg>
            </button>
            <button type="button" aria-label="Close"><svg viewBox="0 0 10 10" className="size-[10px]" stroke="#666" strokeWidth="1.300"><path d="M0 0l10 10M10 0 0 10" /></svg></button>
          </div>
        </div>
        <PanelTools items={TP_ROW_1} />
        <PanelTools items={TP_ROW_2} />
      </div>
      <div className="mt-[6px] mr-[4px] mb-[23px] ml-[2px] flex min-h-0 grow flex-col overflow-hidden border border-[#b9b9b9] bg-white">
        <div className="relative grow pt-px">
          <svg className="pointer-events-none absolute top-0 left-0 h-[150px] w-[100px]" fill="none" stroke="#000" strokeDasharray="1 1" aria-hidden="true">
            <path d="M17 9.500h8M31.500 16v24M36 25.500h8M36 41.500h8M50.500 48v89.500h12M55 57.500h8M69.500 64v58M69.500 73.500h10M69.500 89.500h10M69.500 105.500h10M69.500 121.500h10" />
          </svg>
          <ul className="relative">
            {TREE.map((row) => (
              <li key={row.text} className={clsx('flex h-4 items-center', row.pad)}>
                {row.box && (
                  <button type="button" aria-label="Toggle" className="mr-[5px] size-[11px] shrink-0 border border-[#888] bg-[#f6f6f6]">
                    <svg viewBox="0 0 9 9" className="size-[9px]" stroke="#2050a0">
                      <path d={row.box === '+' ? 'M1 4.500h7M4.500 1v7' : 'M1 4.500h7'} />
                    </svg>
                  </button>
                )}
                <svg viewBox="0 0 16 16" className="mr-[5px] size-4 shrink-0" fill="none" aria-hidden="true">{TREE_ICONS[row.icon]}</svg>
                <span className="text-[11px] leading-4 whitespace-nowrap text-black">{row.text}</span>
              </li>
            ))}
            <li className="flex h-4 items-center gap-1 pl-[61px]">
              <svg viewBox="0 0 15 14" className="h-[14px] w-[15px]" aria-hidden="true"><path d="M0 0l15 7-15 7z" fill="#ff0000" /><path d="M0 0h2v14H0z" fill="#800" /></svg>
              <span className="h-4 w-[163px] bg-[#e4e4e4]" />
            </li>
          </ul>
        </div>
        <div className="mx-px mb-px flex h-[19px] items-center bg-[#f0f0f0]">
          <button type="button" aria-label="Scroll left" className="flex w-[21px] justify-center">
            <svg viewBox="0 0 6 10" className="h-[10px] w-[6px]" fill="none" stroke="#444" strokeWidth="2"><path d="M5.500.5 1 5l4.500 4.500" /></svg>
          </button>
          <span className="h-full grow bg-[#cdcdcd]" />
          <button type="button" aria-label="Scroll right" className="flex w-7 justify-center pl-1">
            <svg viewBox="0 0 6 10" className="h-[10px] w-[6px]" fill="none" stroke="#444" strokeWidth="2"><path d="M.5.5 5 5 .5 9.500" /></svg>
          </button>
        </div>
      </div>
    </section>
  );
}

// ---------------------------------------------------------------------------
// Isometric part
// ---------------------------------------------------------------------------
const HOLES = [[1164, 272], [1284, 341], [988, 453], [1091, 512], [841, 458], [1708, 586]];

const RING_TOP =
  'M1255 347 1175 392Q1168 397 1157 396A109 63 0 0 0 993 433Q988 438 980 439C956 442 954 464 983 469Q993 469 998 476' +
  'A109 63 0 0 0 1052 506Q1061 509 1064 516C1068 532 1112 532 1117 517Q1120 509 1131 509A109 63 0 0 0 1193 418Q1186 409 1195 404' +
  'L1271 360';
const RING_BASE =
  'M962 453V501Q965 513 983 516Q993 516 998 523A109 63 0 0 0 1052 553Q1061 556 1064 563C1068 579 1112 579 1117 564Q1120 556 1131 556' +
  'A109 63 0 0 0 1207 496V449L1098 470 975 450z';

const ISLAND_A =
  'M1244 445Q1243 442 1247 439L1281 420Q1291 415 1302 420L1610 598Q1622 606 1614 614L1583 631Q1570 635 1559 630L1498 595Q1491 590 1498 586' +
  'L1506 581Q1512 574 1504 567L1354 481Q1341 474 1329 480L1322 484Q1314 488 1306 485L1250 452Q1245 449 1244 445z';
const ISLAND_B =
  'M1201 528Q1201 524 1204 522L1237 503Q1249 499 1261 504Q1273 510 1268 515L1257 521Q1250 527 1259 534L1410 621Q1421 627 1433 623' +
  'L1440 618Q1449 613 1461 618Q1474 627 1464 635L1434 652Q1421 658 1410 653L1207 535Q1201 532 1201 528z';

function Gradient({ id, x1, x2, stops }) {
  return (
    <linearGradient id={id} gradientUnits="userSpaceOnUse" x1={x1} x2={x2} y1="0" y2="0">
      {stops.map(([x, color]) => (
        <stop key={x} offset={(x - x1) / (x2 - x1)} stopColor={color} />
      ))}
    </linearGradient>
  );
}

function PartView() {
  return (
    <svg viewBox="393 207 1486 768" className="h-full w-full" preserveAspectRatio="xMidYMid meet" role="img" aria-label="Part">
      <defs>
        <Gradient id="boss1" x1={1135} x2={1193} stops={[[1135, '#4a4a4a'], [1153, '#8d8d8d'], [1155, '#5a5a5a'], [1167, '#4a4a4a'], [1174, '#777'], [1176, '#9a9a9a'], [1193, '#606060']]} />
        <Gradient id="boss2" x1={1271} x2={1314} stops={[[1271, '#444'], [1283, '#777'], [1284, '#444'], [1294, '#666'], [1296, '#999'], [1304, '#606060'], [1314, '#777']]} />
        <Gradient
          id="ringSide"
          x1={962}
          x2={1207}
          stops={[[962, '#606060'], [972, '#8d8d8d'], [983, '#606060'], [998, '#747474'], [1030, '#868686'], [1051, '#666'], [1053, '#505050'], [1064, '#888'], [1072, '#868686'], [1092, '#555'], [1103, '#444'], [1116, '#666'], [1118, '#444'], [1130, '#666'], [1132, '#444'], [1160, '#444'], [1175, '#505050'], [1195, '#868686'], [1203, '#999'], [1207, '#f4f4f4']]}
        />
        <Gradient id="bore" x1={1016} x2={1180} stops={[[1016, '#eee'], [1023, '#777'], [1060, '#444'], [1082, '#484848'], [1110, '#606060'], [1160, '#808080'], [1180, '#8a8a8a']]} />
        <Gradient id="cornerA" x1={1306} x2={1354} stops={[[1306, '#868686'], [1318, '#444'], [1328, '#555'], [1330, '#909090'], [1345, '#606060'], [1354, '#777']]} />
        <Gradient id="cornerB" x1={1559} x2={1583} stops={[[1559, '#868686'], [1583, '#484848']]} />
        <Gradient id="cornerC" x1={1410} x2={1434} stops={[[1410, '#868686'], [1434, '#484848']]} />
        <linearGradient id="hole"><stop offset="0" stopColor="#3c3c3c" /><stop offset=".4" stopColor="#555" /><stop offset="1" stopColor="#909090" /></linearGradient>
        <clipPath id="boreClip"><ellipse cx="1098" cy="449" rx="82" ry="47.700" /></clipPath>
        <clipPath id="cavity"><path d="M1180 300 1679 569 1685 580V600L1532 688 1260 699 868 475z" /></clipPath>
      </defs>

      <g stroke="#0c0c0c" strokeWidth="1.200" strokeLinejoin="round">
        {/* block */}
        <path d="M802 458 1249 716V762L1385 841V864L802 528z" fill="#7f7f7f" />
        <path d="M923 528V597" />
        <path d="M1249 716 1539 706V753L1249 762z" fill="#585858" />
        <path d="M1539 706 1747 586V656L1385 864V841L1539 753z" fill="#494949" />
        <path d="M1249 762 1539 753 1385 841z" fill="#959595" />
        <path d="M802 458 1164 249 1747 586 1539 706 1249 716z" fill="#959595" />

        {/* upper pocket */}
        <path d="M870 441 1135 289V336L882 481 870 476z" fill="#494949" />
        <path d="M870 441C860 446 868 453 869 458 869 463 859 472 870 476z" fill="#606060" />
        <path d="M1135 289Q1142 285 1150 286 1157 288 1164 288 1171 288 1177 286 1186 285 1193 289V335Q1184 332 1177 333 1164 336 1152 333 1142 332 1135 336z" fill="url(#boss1)" />
        <path d="M1154 287V333M1175 287V334" />
        <path d="M1193 289 1256 324V347L1233 358 1193 335z" fill="#7f7f7f" />
        <path d="M1256 324Q1263 329 1260 335 1256 342 1256 347z" fill="#8a8a8a" />

        {/* lower pocket */}
        <path d="M1195 404 1271 360V407L1207 443Q1205 427 1193 418 1186 409 1195 404z" fill="#494949" />
        <path d="M1195 405V419" />
        <path d="M1271 360Q1277 356 1284 357 1290 357 1295 356 1304 353 1314 358V405Q1304 401 1295 403 1285 404 1278 404L1271 407z" fill="url(#boss2)" />
        <path d="M1284 357V404M1295 356V403" />
        <path d="M1314 358 1679 569V603L1668 609 1314 405z" fill="#7f7f7f" />
        <path d="M1679 569C1692 577 1681 582 1682 587 1683 592 1689 599 1679 604z" fill="#8a8a8a" />
        <path d="M870 476 1258 698Q1262 700 1267 699L1524 691Q1528 691 1532 689L1679 604" fill="none" />

        {/* islands */}
        <g clipPath="url(#cavity)">
          <path d="M1244 445V474Q1245 479 1250 481L1306 514V485z" fill="#7f7f7f" />
          <path d="M1250 452V481" />
          <path d="M1306 484V514Q1314 518 1322 513L1329 509Q1341 503 1354 510V480L1329 478z" fill="url(#cornerA)" />
          <path d="M1322 484V513M1329 480V509" />
          <path d="M1354 481 1506 567V582L1495 590 1354 510z" fill="#7f7f7f" />
          <path d="M1494 590V619Q1495 622 1498 624L1559 658V630z" fill="#7f7f7f" />
          <path d="M1498 595V624" />
          <path d="M1559 630V658Q1570 665 1583 660V631z" fill="url(#cornerB)" />
          <path d="M1583 631 1613 615V645L1583 660z" fill="#494949" />
          <path d="M1613 615 1618 608V640L1613 643z" fill="#aaa" />
          <path d={ISLAND_A} fill="#959595" />

          <path d="M1256 521 1269 513V540L1259 534z" fill="#505050" />
          <path d="M1267 514V538" />
          <path d="M1201 528V558Q1202 562 1207 564L1410 681V653z" fill="#7f7f7f" />
          <path d="M1207 535V564M1308 594V623" />
          <path d="M1410 653V681Q1421 687 1434 681V652z" fill="url(#cornerC)" />
          <path d="M1434 652 1464 635V664L1434 681z" fill="#494949" />
          <path d="M1464 635 1469 628V657Q1469 661 1464 664z" fill="#aaa" />
          <path d={ISLAND_B} fill="#959595" />
        </g>

        {/* ring with its two bosses and the rib */}
        <path d={RING_BASE} fill="url(#ringSide)" />
        <path d="M983 468V516M998 475V523M1052 505V553M1064 515V563M1117 516V564M1131 508V556M1175 494V541" />
        <path d={RING_TOP} fill="#959595" />
        <ellipse cx="1098" cy="449" rx="82" ry="47.700" fill="url(#bore)" />
        <g clipPath="url(#boreClip)"><ellipse cx="1098" cy="478" rx="82" ry="47.700" fill="#959595" /></g>
        <ellipse cx="1098" cy="449" rx="82" ry="47.700" fill="none" />

        {HOLES.map(([x, y]) => (
          <ellipse key={x} cx={x} cy={y} rx="11" ry="6.500" fill="url(#hole)" />
        ))}
      </g>
      <path d="M841 451v15M832 458h18M834 453l14 10M848 453l-14 10" stroke="#1e7fe0" strokeWidth="1.200" />

      {/* axis triad */}
      <g strokeWidth="2">
        <path d="M449 920V903" stroke="#00008b" /><path d="M449 892l4 15h-8z" fill="#00008b" />
        <path d="M449 920 463 911" stroke="#008800" /><path d="M474 905l-8 10-4-6z" fill="#008800" />
        <path d="M449 920 463 928" stroke="#c00000" /><path d="M474 933l-12-2 4-6z" fill="#c00000" />
      </g>
      <g className="font-['Open_Sans',sans-serif] text-xs font-bold" textAnchor="middle">
        <text x="450" y="889" fill="#0000ff">Z</text>
        <text x="480" y="906" fill="#00ee00">Y</text>
        <text x="479" y="940" fill="#ff0000">X</text>
      </g>
      <g className="font-['Open_Sans','Noto_Sans_CJK_TC',sans-serif] font-bold" fontSize="13">
        <text x="413" y="963">等角視圖</text>
        <text x="1808" y="949" textAnchor="middle">33.501 mm</text>
        <text x="1808" y="963" textAnchor="middle" fontSize="12">公制</text>
      </g>
      <path d="M1759.500 940v24M1855.500 940v24M1759 951.500h97" stroke="#000" />
    </svg>
  );
}

function WarningDialog({ onClose }) {
  return (
    <div role="alertdialog" aria-label="警告" className="absolute top-[423px] left-[223px] flex w-[276px] flex-col border border-[#1883d7] bg-white text-black shadow-[0_4px_16px_rgba(0,0,0,0.35)]">
      <div className="flex h-9 items-center pr-[15px] pl-[9px]">
        <svg viewBox="0 0 19 16" className="mr-[6px] h-4 w-[19px]" aria-hidden="true">
          <path d="M.5.5h18v15H.5z" fill="#e8eaec" stroke="#a8adb3" />
          <path d="M2 3h7v10H2z" fill="#3f8a86" /><path d="M15 3h2v6h-2z" fill="#3f7f9a" /><path d="M10 3h4v10h-4z" fill="#fff" />
        </svg>
        <h3 className="grow pb-[2px] text-[15px] leading-5">警告</h3>
        <button type="button" aria-label="Close" onClick={onClose}>
          <svg viewBox="0 0 12 12" className="size-3" stroke="#000" strokeWidth="1.200"><path d="M0 0l12 12M12 0 0 12" /></svg>
        </button>
      </div>
      <div className="flex h-[119px] pt-[33px] pl-7">
        <svg viewBox="0 0 40 40" className="mr-[11px] size-10" aria-hidden="true">
          <path d="M20 1 39.500 39.500H.5z" fill="#ffe000" stroke="#fbb400" />
          <path d="M19 15h2l-.5 14h-1zM19 32h2v2h-2z" fill="#000" />
        </svg>
        <div className="text-sm leading-[18px]">
          <p>錯誤 - 重建操作時錯誤！</p>
          <p className="mt-[18px]">2D挖槽 (標準)</p>
        </div>
      </div>
      <div className="flex h-[58px] justify-end bg-[#f0f0f0] pt-[14px] pr-[23px]">
        <button type="button" onClick={onClose} className="h-[30px] w-[98px] border-2 border-[#0078d7] bg-[#e1e1e1] text-sm">確定</button>
      </div>
    </div>
  );
}

// ---------------------------------------------------------------------------
// Status bar
// ---------------------------------------------------------------------------
const SERIF = "font-['Liberation_Serif','Noto_Sans_CJK_TC',serif]";

function Cell({ w, className = 'justify-center bg-white', children, label }) {
  return (
    <button type="button" aria-label={label} className={clsx('flex h-[23px] shrink-0 items-center overflow-hidden border-t border-l border-[#c8d0d0] text-[15px] whitespace-nowrap text-black', w, className)}>
      {children}
    </button>
  );
}

const SWATCHES = [
  { label: 'Wire color', bar: 'bg-[#000080]', art: <path d="M1 1h6v6H1zM4 4h7v7H4z" fill="#fff" stroke="#444" strokeWidth="1.300" /> },
  { label: 'Solid color', bar: 'bg-[#808080]', art: <><path d="M1 3l6-2 4 2v6l-5 3-5-3z" fill="#999" /><path d="M6 5l5-2v6l-5 3z" fill="#444" /></> },
  { label: 'Surface color', bar: 'bg-[#ff8040]', art: <path d="M2 3l9-2v9l-9 2zM6 2v9M2 7l9-1" fill="#ddd" stroke="#555" /> },
];

const Caret = () => (
  <svg viewBox="0 0 8 6" className="h-[6px] w-2 shrink-0" aria-hidden="true"><path d="M0 0h8L4 6z" fill="#777" /></svg>
);
const Chevron = () => (
  <svg viewBox="0 0 10 6" className="pointer-events-none h-[6px] w-[10px] shrink-0" fill="none" stroke="#444" aria-hidden="true"><path d="M.5.5 5 5 9.500.5" /></svg>
);

function StatusBar() {
  return (
    <footer className="flex h-[25px] shrink-0 items-end bg-[#606060]">
      <p className="grow self-center pl-1 text-sm leading-5 whitespace-pre text-white">WCS: 俯視圖  刀具/構圖平面: 俯視圖</p>
      <div className={clsx('flex gap-[2px]', SERIF)}>
        <Cell w="w-[31px]">3D</Cell>
        <Cell w="w-[76px]">螢幕視角</Cell>
        <Cell w="w-[55px]">WCS</Cell>
        <Cell w="w-8">平面</Cell>
        <div className="flex h-[23px] w-[125px] items-center bg-white pr-1 text-[15px] text-black">
          <label htmlFor="z-depth" className={clsx('flex h-full w-[18px] items-center justify-center bg-[#f0f0f0]', UI_FONT)}>Z</label>
          <input id="z-depth" defaultValue="0.0" className={clsx('ml-[2px] h-[21px] w-[82px] min-w-0 bg-[#ffff80] pl-[3px] outline-none', UI_FONT)} />
          <span className="ml-auto"><Chevron /></span>
        </div>
        {SWATCHES.map((s) => (
          <Cell key={s.label} w="w-[40px]" label={s.label} className="flex-col justify-between bg-white">
            <svg viewBox="0 0 12 13" className="mt-[2px] h-[11px] w-3">{s.art}</svg>
            <span className={clsx('mb-[2px] h-[6px] w-9', s.bar)} />
          </Cell>
        ))}
        <div className="flex h-[23px] w-[167px] items-center bg-white pr-[5px] text-black">
          <label htmlFor="level" className="flex h-full w-9 items-center justify-center bg-[#ff8080] text-[14px]">層別</label>
          <select id="level" className={clsx('h-full grow appearance-none bg-white pl-1 text-[15px] outline-none', UI_FONT)}>
            <option>2 : Solid</option>
          </select>
          <Chevron />
        </div>
        <Cell w="w-[40px]" className="justify-center bg-[#f0f0f0]">屬性</Cell>
        <Cell w="w-[52px]" label="Point style" className="justify-between bg-white pr-2 pl-1">
          <svg viewBox="0 0 10 10" className="mt-1 size-[10px]" stroke="#000"><path d="M5 0v10M0 5h10M2 8l6-6" /></svg>
          <Caret />
        </Cell>
        <Cell w="w-[74px]" label="Line style" className="justify-between bg-white pr-2 pl-[3px]"><span className="h-[3px] w-[47px] bg-black" /><Caret /></Cell>
        <Cell w="w-[83px]" label="Line width" className="justify-between bg-white pr-2 pl-[3px]"><span className="h-[2px] w-14 bg-black" /><Caret /></Cell>
        <Cell w="w-12">群組</Cell>
        <Cell w="w-[23px]">?</Cell>
      </div>
    </footer>
  );
}

// ---------------------------------------------------------------------------
// Windows taskbar
// ---------------------------------------------------------------------------
const RedBall = ({ cx, cy, r }) => (
  <>
    <circle cx={cx} cy={cy} r={r} fill="#d3152c" stroke="#6a0a14" />
    <path d={`M${cx - r * 0.75} ${cy - r * 0.5}q${r * 0.75} ${r * 0.05} ${r * 0.75} ${r * 0.6}v${r * 0.7}v-${r * 0.7}q0-${r * 0.55} ${r * 0.75}-${r * 0.6}`} fill="none" stroke="#3a1a20" strokeWidth="2" />
  </>
);

const APPS = [
  { label: 'Start', w: 'w-[60px]', art: <path d="M5 9l9-1v8H5zM15 8l10-2v10H15zM5 17h9v8l-9-1zM15 17h10v10l-10-1z" fill="#fff" /> },
  { label: 'Search', w: 'w-[60px]', art: <><circle cx="18" cy="12" r="6.500" stroke="#fff" strokeWidth="1.500" /><path d="M13 17 5 25" stroke="#fff" strokeWidth="1.500" /></> },
  { label: 'Task view', w: 'w-[63px]', art: <><path d="M4 6v3h12V6M4 11h12v9H4zM4 25v-3h12v3M21.500 6v5M21.500 16v9" stroke="#fff" strokeWidth="1.500" /><path d="M20 12h3v3h-3z" fill="#fff" /></> },
  { label: 'Viewer', w: 'w-[62px]', art: <><path d="M0 0h30v30H0z" fill="#0078d7" /><RedBall cx={15} cy={15} r={9.5} /></> },
  { label: 'Edge', w: 'w-[62px]', art: <path d="M3 14Q5 2 16 2q12 1 12 14v2H11q0 6 7 6 5 0 9-2v5q-5 2-10 2-11-1-12-11 0-7 8-10-2 2-3 5h11q0-5-5-6Q7 7 3 14z" fill="#0a7ee0" /> },
  { label: 'Explorer', w: 'w-[62px]', art: <><path d="M2 3h11l2 3h13v19H2z" fill="#f6d16a" /><path d="M2 8h26v17H2z" fill="#ffe69a" /><path d="M7 15h17v11h-4v-6h-9v6H7z" fill="#3fb3e8" /></> },
  { label: 'Store', w: 'w-[62px]', art: <><path d="M10 8V4q0-3 5-3t5 3v4" stroke="#ddd" strokeWidth="1.500" /><path d="M1 7h28v21H1z" fill="#fff" /><path d="M8 12h6v6H8z" fill="#e8542a" /><path d="M15 12h6v6h-6z" fill="#7fba20" /><path d="M8 19h6v5H8z" fill="#16a0e8" /><path d="M15 19h6v5h-6z" fill="#f8b800" /></> },
  { label: 'Mail', w: 'w-[62px]', art: <><path d="M0 10 15 2l15 8v16H0z" fill="#fff" /><path d="M1 11h28L17 15l9 9-13-8z" fill="#0d0d0d" /></> },
  { label: 'Opera', w: 'w-[62px]', art: <><ellipse cx="15" cy="15" rx="14" ry="14" fill="#e8192e" /><ellipse cx="15" cy="15" rx="6" ry="10" fill="#0d0d0d" /></> },
  { label: 'Mastercam', w: 'w-[61px]', active: true, art: <><path d="M1 6h7l13 21h-7z" fill="#6a7076" stroke="#999" /><path d="M19 6l3 1L8 29H1z" fill="#4a4f54" stroke="#888" /><circle cx="25" cy="4.500" r="2.500" stroke="#e02030" strokeWidth="2" /><path d="M27.500 4.500q1 6-5 6" stroke="#e02030" strokeWidth="2" /></> },
  { label: 'Paint 3D', w: 'w-[61px]', running: true, art: <><defs><linearGradient id="drop" x1="0" x2="0" y1="0" y2="1"><stop offset="0" stopColor="#20d8f0" /><stop offset=".4" stopColor="#7a6af0" /><stop offset=".75" stopColor="#e84a80" /><stop offset="1" stopColor="#f0a020" /></linearGradient></defs><path d="M15 0q11 1 11 11 0 8-12 19 0-6-4-9-6-4-6-10 1-10 11-11z" fill="url(#drop)" /></> },
];

function Taskbar() {
  return (
    <footer className="flex h-[50px] shrink-0 justify-between bg-linear-to-r from-[#0c0c0d] from-70% via-[#1f0c0d] via-80% to-[#0e0d0d] to-90%">
      <div className="flex">
        {APPS.map((a) => (
          <button key={a.label} type="button" aria-label={a.label} className={clsx('flex h-full flex-col items-center', a.w, a.active && 'bg-[#3e3e3f]')}>
            <svg viewBox="0 0 30 30" className="mt-[10px] size-[30px]" fill="none">{a.art}</svg>
            {(a.active || a.running) && <span className={clsx('mt-auto h-[3px] bg-[#76b9ed]', a.active ? 'w-full' : 'w-[51px]')} />}
          </button>
        ))}
      </div>
      <div className="flex items-center text-white">
        <button type="button" aria-label="Viewer" className="w-[50px]"><svg viewBox="0 0 26 26" className="mx-auto size-[26px]" fill="none"><RedBall cx={13} cy={13} r={12} /></svg></button>
        <button type="button" aria-label="People" className="w-[50px]">
          <svg viewBox="0 0 20 20" className="mx-auto size-5" fill="none" stroke="#fff" strokeWidth="1.500"><circle cx="7" cy="10" r="3" /><path d="M1 19q0-6 6-6t6 6" /><circle cx="13" cy="4" r="3" /><path d="M11 8q7-1 7 6" /></svg>
        </button>
        <button type="button" aria-label="Hidden icons" className="w-9"><svg viewBox="0 0 16 9" className="mx-auto h-[9px] w-4" fill="none" stroke="#fff" strokeWidth="1.500"><path d="M1 8l7-7 7 7" /></svg></button>
        <span className="w-[30px]"><svg viewBox="0 0 20 14" className="mx-auto h-[14px] w-5" fill="none" stroke="#fff"><path d="M6 3.500h12v8H4M1 0v2M4 0v2M0 3h5v3H0zM2.500 6v6h2" /><path d="M6 5h11v5H6z" fill="#fff" /></svg></span>
        <span className="w-[30px]"><svg viewBox="0 0 20 20" className="mx-auto size-5" fill="none" stroke="#777"><path d="M5 18Q6 7 18 5M9 18q0-8 9-9M13 18q0-4 5-5" /><path d="M3 1v6M0 4h6M1 2l4 4M5 2 1 6" stroke="#fff" /><circle cx="17" cy="17" r="1.500" fill="#777" /></svg></span>
        <span className="w-[30px]"><svg viewBox="0 0 20 16" className="mx-auto h-4 w-5" fill="none" stroke="#fff"><path d="M.5 5.500h3l4-4v13l-4-4h-3z" /><path d="M10 6q2 2 0 4" /><path d="M13 4q3 4 0 8M16 2q4 6 0 12" stroke="#777" /></svg></span>
        <span className="w-[27px]"><svg viewBox="0 0 18 18" className="mx-auto size-[18px]"><circle cx="9" cy="9" r="9" fill="#909090" /><path d="M5 5l8 8M13 5l-8 8" stroke="#111" strokeWidth="2" /></svg></span>
        <p className="w-[94px] text-center text-[15px] leading-[22px]">下午 12:40<br />2018/12/24</p>
        <button type="button" aria-label="Notifications" className="w-[48px]"><svg viewBox="0 0 20 20" className="mx-auto size-5" fill="none" stroke="#fff" strokeWidth="1.300"><path d="M1 1h18v14h-6l-3 3-3-3H1z" /></svg></button>
        <span className="mr-[5px] ml-[11px] h-full w-px bg-[#555]" />
      </div>
    </footer>
  );
}

export default function App() {
  const [warning, setWarning] = useState(true);

  return (
    <div className={clsx('flex h-screen min-w-[1200px] flex-col overflow-hidden bg-[#f0f0f0]', UI_FONT)}>
      <header className="flex shrink-0 flex-col">
        <TitleBar />
        <nav aria-label="Menu" className="flex h-[27px] items-center gap-[14px] pl-4 text-sm text-black">
          {MENUS.map((m) => (
            <button key={m} type="button" className="whitespace-nowrap">{m}</button>
          ))}
        </nav>
        <div className="flex h-9 items-center"><Tokens items={ROW_1} /></div>
        <div className="flex h-[38px] items-center"><Tokens items={ROW_2} /></div>
        <div className="flex h-10 items-center">
          <div className="flex w-[561px] shrink-0 items-center pl-[5px]">
            <span className="mr-1 h-[25px] border-l-2 border-dotted border-[#c4c4c4]" />
            <CoordBox axis="X" value="-272.34678" />
            <CoordBox axis="Y" value="-161.83908" />
            <CoordBox axis="Z" value="0.0" />
          </div>
          <Tokens items={ROW_3} wideGrip />
        </div>
      </header>

      <main className="flex min-h-0 grow">
        <SideBar items={LEFT_BAR} label="Solids" className="w-[37px] pr-[2px]" moreClass="mt-auto mb-[5px] pr-[3px]" />
        <div className="flex min-w-0 grow flex-col">
          <div className="flex h-[39px] shrink-0 items-center border-b-4 border-[#e5e5e5] pt-[10px] pl-[252px] text-xs text-black">功能區列</div>
          <div className="flex min-h-0 grow">
            <ToolpathManager />
            <div className="ml-[3px] flex min-w-0 grow flex-col">
              <div className="relative min-h-0 grow bg-[linear-gradient(to_bottom,#96a1aa_0%,#c0c4ce_36%,#c9cdd0_48%,#dde1e4_66%,#f1f2f4_84%,#ffffff_100%)]">
                <PartView />
                {warning && <WarningDialog onClose={() => setWarning(false)} />}
              </div>
              <div className="shrink-0 border-t border-[#e4e4e4] bg-white pt-px">
                <div className="flex h-7 border-t border-[#c0c0c0]">
                  <button type="button" className="h-full w-[79px] text-[14px] text-[#555]">翋弝芞醱啣</button>
                  <div className="mt-[3px] grow border-t border-l border-[#c0c0c0] bg-[#f0f0f0]" />
                </div>
              </div>
            </div>
          </div>
        </div>
        <SideBar items={RIGHT_BAR} label="Quick masks" className="w-[41px] pt-[2px] pr-[5px]" moreClass="mt-3" />
      </main>

      <StatusBar />
      <Taskbar />
    </div>
  );
}
